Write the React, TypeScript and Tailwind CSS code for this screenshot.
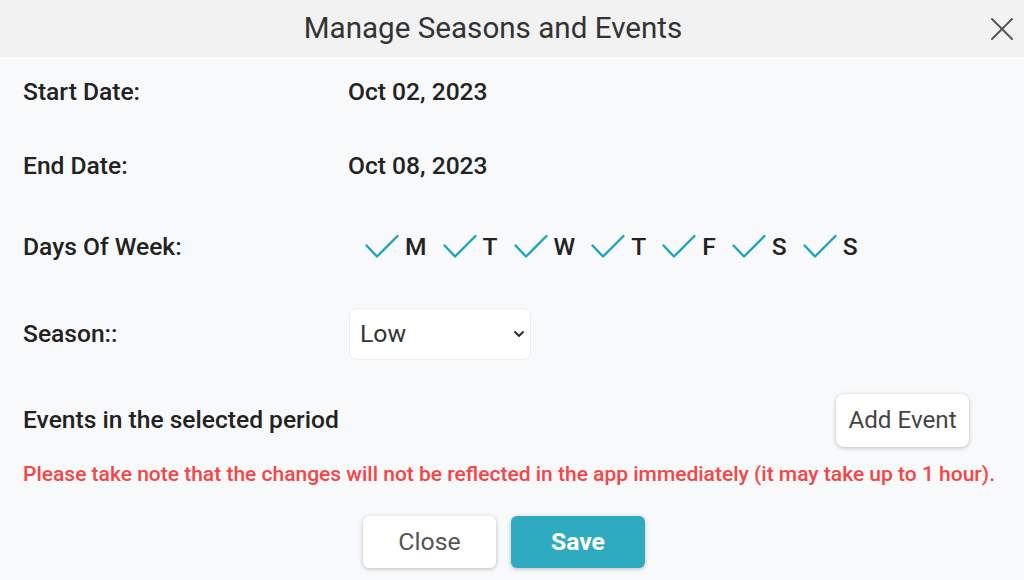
import { X } from "lucide-react"

const days = ["M", "T", "W", "T", "F", "S", "S"]

const Check = () => (
    <svg width="34" height="25" viewBox="0 0 34 25" fill="none">
        <path d="M1.5 11.5 L12 22.5 L32.5 2" stroke="#1fa3bd" strokeWidth="2.4" strokeLinecap="round" strokeLinejoin="round" />
    </svg>
)

export default function App() {
    return (
        <div className="w-[1024px] h-[580px] bg-[#f8f9fb] flex flex-col font-['Roboto',sans-serif] text-[#222]">
            <div className="h-[57px] bg-[#f2f2f2] flex items-center justify-center relative pr-[38px]">
                <h1 className="text-[29.6px] leading-[36px] text-[#333] mt-[-2px]">Manage Seasons and Events</h1>
                <button className="absolute right-[2px] top-[9px] text-[#555]">
                    <X size={40} strokeWidth={1.2} />
                </button>
            </div>
            <div className="flex flex-col px-[23px]">
                <div className="flex items-center h-[68px] mt-[1px]">
                    <span className="w-[325px] text-[24.6px] font-medium">Start Date:</span>
                    <span className="text-[24.6px] font-medium">Oct 02, 2023</span>
                </div>
                <div className="flex items-center h-[81px]">
                    <span className="w-[325px] text-[24.6px] font-medium">End Date:</span>
                    <span className="text-[24.6px] font-medium">Oct 08, 2023</span>
                </div>
                <div className="flex items-center h-[80px]">
                    <span className="w-[342px] text-[24.6px] font-medium">Days Of Week:</span>
                    <div className="flex items-center gap-[16px]">
                        {days.map((d, i) => (
                            <div key={i} className="flex items-center gap-[6px]">
                                <Check />
                                <span className="text-[24.6px] font-medium">{d}</span>
                            </div>
                        ))}
                    </div>
                </div>
                <div className="flex items-center h-[94px]">
                    <span className="w-[326px] text-[24.6px] font-medium">Season::</span>
                    <div className="w-[182px] h-[52px] bg-white rounded-[8px] border border-[#eceef1] flex items-center justify-between pl-[10px] pr-[4px]">
                        <span className="text-[24.8px] text-[#333]">Low</span>
                        <svg width="14" height="10" viewBox="0 0 14 10" fill="none">
                            <path d="M3 3 L7 7 L11 3" stroke="#222" strokeWidth="1.8" strokeLinecap="round" />
                        </svg>
                    </div>
                </div>
                <div className="flex items-center justify-between h-[78px] pr-[32px]">
                    <span className="text-[24.6px] font-medium">Events in the selected period</span>
                    <button className="w-[133px] h-[53px] bg-white rounded-[8px] shadow-[0_1px_4px_rgba(0,0,0,0.25)] text-[24.2px] text-[#444]">Add Event</button>
                </div>
                <p className="text-[21px] leading-[26px] font-medium text-[#f54545] mt-[2px] whitespace-nowrap">
                    Please take note that the changes will not be reflected in the app immediately (it may take up to 1 hour).
                </p>
                <div className="flex justify-center gap-[15px] mt-[29px] pr-[16px]">
                    <button className="w-[133px] h-[52px] bg-white rounded-[6px] shadow-[0_1px_4px_rgba(0,0,0,0.25)] text-[24.8px] text-[#555]">Close</button>
                    <button className="w-[134px] h-[52px] bg-[#2eabc1] rounded-[6px] shadow-[0_1px_4px_rgba(0,0,0,0.25)] text-[24.7px] font-bold text-white">Save</button>
                </div>
            </div>
        </div>
    )
}
